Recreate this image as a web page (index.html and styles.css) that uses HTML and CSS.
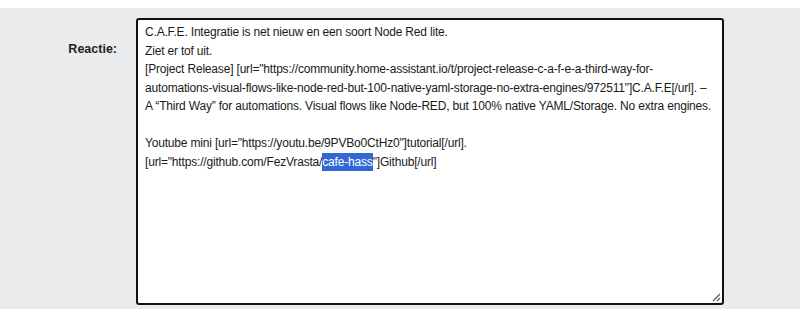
FILE: index.html
```html
<!DOCTYPE html>
<html>
<head>
  <title>Reactie</title>
  <link rel="stylesheet" href="styles.css">
</head>
<body>
  <div class="panel">
    <div class="row">
      <label class="label" for="reactie">Reactie:</label>
      <div class="textarea" id="reactie">
        <div class="line">C.A.F.E. Integratie is net nieuw en een soort Node Red lite.</div>
        <div class="line">Ziet er tof uit.</div>
        <div class="line">[Project Release] [url="https://community.home-assistant.io/t/project-release-c-a-f-e-a-third-way-for-</div>
        <div class="line">automations-visual-flows-like-node-red-but-100-native-yaml-storage-no-extra-engines/972511"]C.A.F.E[/url]. –</div>
        <div class="line">A “Third Way” for automations. Visual flows like Node-RED, but 100% native YAML/Storage. No extra engines.</div>
        <div class="line">&nbsp;</div>
        <div class="line">Youtube mini [url="https://youtu.be/9PVBo0CtHz0"]tutorial[/url].</div>
        <div class="line">[url="https://github.com/FezVrasta/<span class="selected">cafe-hass</span>"]Github[/url]</div>
        <svg class="grip" width="9" height="9" viewBox="0 0 9 9">
          <path d="M8 1 L1 8 M8 5 L5 8" stroke="#555" stroke-width="1.2" fill="none"/>
        </svg>
      </div>
    </div>
  </div>
</body>
</html>
```

FILE: styles.css
```css
body {
  margin: 0;
  background: #fff;
  font-family: "Liberation Sans", Arial, sans-serif;
  font-size: 12px;
  color: #1a1a1a;
}
.panel {
  margin-top: 8px;
  background: #eaebed;
  padding: 10px 0 4px 0;
}
.row {
  display: flex;
  align-items: flex-start;
}
.label {
  width: 117px;
  text-align: right;
  font-weight: bold;
  font-size: 12.5px;
  padding-top: 24px;
  margin-right: 19px;
  color: #222;
}
.textarea {
  position: relative;
  width: 570px;
  height: 279px;
  background: #fff;
  border: 2px solid #111;
  border-radius: 3px;
  padding: 3px 7px 1px 7px;
  line-height: 18.5px;
  letter-spacing: -0.18px;
}
.line {
  white-space: nowrap;
}
.selected {
  background: #3367d6;
  color: #fff;
  padding: 2px 0 2px 0;
}
.grip {
  position: absolute;
  right: 1px;
  bottom: 1px;
}
```
